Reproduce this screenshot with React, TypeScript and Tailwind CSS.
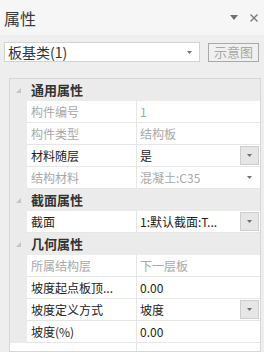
import React from "react";

const F = { fontFamily: '"Noto Sans CJK SC", "Noto Sans", sans-serif' };

function Arrow({ boxed }: { boxed?: boolean }) {
  return (
    <div
      className={
        "w-[19px] h-[19px] flex items-center justify-center " +
        (boxed ? "bg-[#e6e6e6] border border-[#cdcdcd]" : "")
      }
    >
      <svg width="5" height="3" viewBox="0 0 5 3">
        <path d="M0 0H5L2.5 3Z" fill="#707070" />
      </svg>
    </div>
  );
}

function Category({ label }: { label: string }) {
  return (
    <div className="h-[22px] flex items-center bg-[#ebebeb]">
      <div className="w-[17px] h-full flex items-center justify-center">
        <svg width="5" height="5" viewBox="0 0 5 5">
          <path d="M5 0V5H0Z" fill="#c4c4c4" />
        </svg>
      </div>
      <span className="pl-[4px] text-[13px] font-bold text-[#333]" style={F}>
        {label}
      </span>
    </div>
  );
}

function Prop({
  name,
  value,
  disabled,
  arrow,
}: {
  name: string;
  value: string;
  disabled?: boolean;
  arrow?: "box" | "plain";
}) {
  const c = disabled ? "text-[#a8a8a8]" : "text-[#222]";
  return (
    <div className="h-[22px] flex bg-[#ebebeb]">
      <div className="w-[17px]" />
      <div className="w-[110px] bg-white border-b border-r border-[#e6e6e6] flex items-center pl-[4px]">
        <span className={"text-[12px] whitespace-nowrap " + c} style={F}>
          {name}
        </span>
      </div>
      <div className="flex-1 bg-white border-b border-[#e6e6e6] flex items-center pl-[3px] pr-[1px]">
        <span className={"flex-1 text-[12px] whitespace-nowrap " + c} style={F}>
          {value}
        </span>
        {arrow && <Arrow boxed={arrow === "box"} />}
      </div>
    </div>
  );
}

export default function App() {
  return (
    <div className="w-[264px] h-[352px] bg-[#eeeeee] flex flex-col overflow-hidden" style={F}>
      <div className="h-[35px] bg-[#f6f6f6] flex items-center pl-[4px] pr-[6px] shrink-0">
        <span className="flex-1 text-[16px] text-[#3a3a3a]" style={F}>
          属性
        </span>
        <svg width="8" height="5" viewBox="0 0 8 5" className="mr-[12px]">
          <path d="M0 0H8L4 5Z" fill="#707070" />
        </svg>
        <svg width="8" height="8" viewBox="0 0 8 8">
          <path d="M0.5 0.5L7.5 7.5M7.5 0.5L0.5 7.5" stroke="#7a7a7a" strokeWidth="1.4" />
        </svg>
      </div>
      <div className="flex items-center mt-[7px] pl-[4px] pr-[5px] shrink-0">
        <div className="w-[196px] h-[20px] bg-white border border-[#d3d3d3] flex items-center pl-[3px] pr-[7px]">
          <span className="flex-1 text-[14px] text-[#333]" style={F}>
            板基类(1)
          </span>
          <svg width="5" height="3" viewBox="0 0 5 3">
            <path d="M0 0H5L2.5 3Z" fill="#707070" />
          </svg>
        </div>
        <div className="ml-auto w-[51px] h-[19px] border border-[#a9a9a9] flex items-center justify-center bg-[#f0f0f0]">
          <span className="text-[13px] text-[#a8a8a8]" style={F}>
            示意图
          </span>
        </div>
      </div>
      <div className="mt-[16px] ml-[9px] mr-[3px] flex-1 border border-[#d6d6d6] bg-white flex flex-col">
        <Category label="通用属性" />
        <Prop name="构件编号" value="1" disabled />
        <Prop name="构件类型" value="结构板" disabled />
        <Prop name="材料随层" value="是" arrow="box" />
        <Prop name="结构材料" value="混凝土:C35" disabled arrow="plain" />
        <Category label="截面属性" />
        <Prop name="截面" value="1:默认截面:T..." arrow="box" />
        <Category label="几何属性" />
        <Prop name="所属结构层" value="下一层板" disabled />
        <Prop name="坡度起点板顶..." value="0.00" />
        <Prop name="坡度定义方式" value="坡度" arrow="box" />
        <Prop name="坡度(%)" value="0.00" />
        <div className="flex-1 flex">
          <div className="w-[127px] border-r border-[#e6e6e6]" />
        </div>
      </div>
    </div>
  );
}
